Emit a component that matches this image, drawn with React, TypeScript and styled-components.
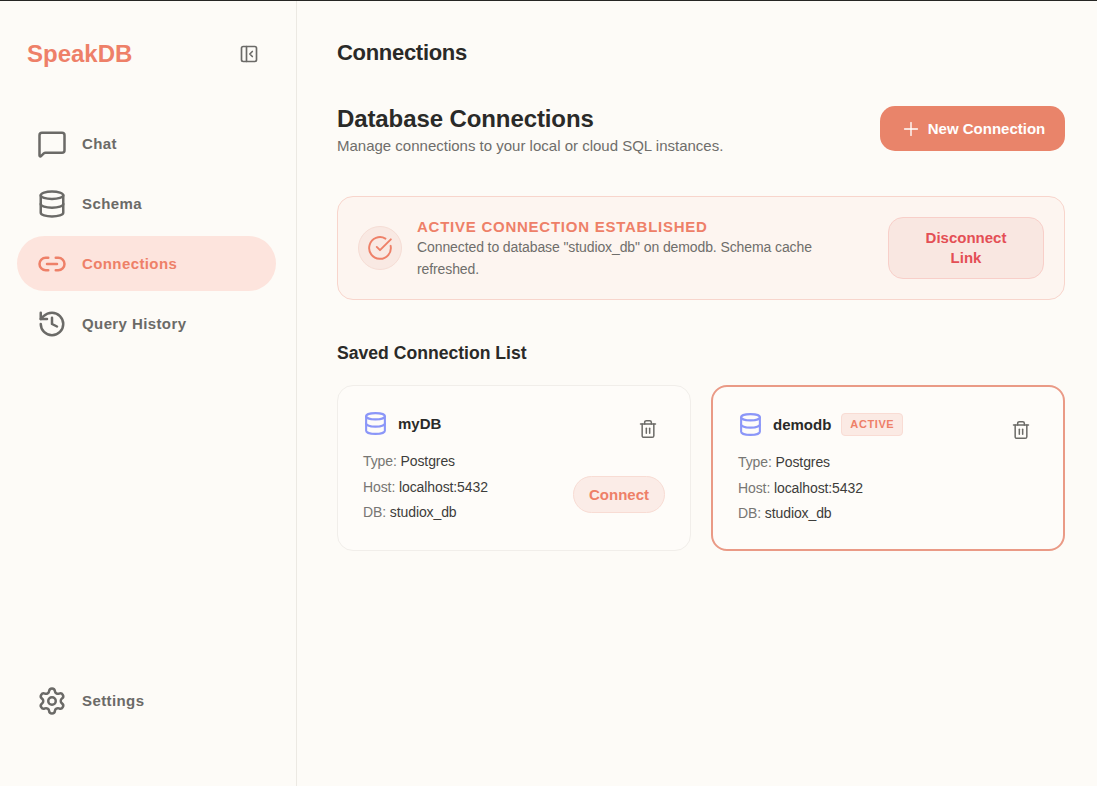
import React from 'react';
import styled, { createGlobalStyle } from 'styled-components';
import {
  CircleCheckBig,
  Database,
  History,
  Link2,
  MessageSquare,
  PanelLeftClose,
  Plus,
  Settings,
  Trash2,
} from 'lucide-react';

const GlobalStyle = createGlobalStyle`
  html, body {
    margin: 0;
    height: 100%;
    background: #fdfbf7;
  }
  #root { height: 100%; }
  * { box-sizing: border-box; }
  body {
    font-family: "Liberation Sans", Arial, sans-serif;
    color: #2a2a28;
  }
`;

const Shell = styled.div`
  display: flex;
  height: 786px;
  border-top: 1px solid #262624;
  overflow: hidden;
`;

const Sidebar = styled.aside`
  width: 297px;
  flex: none;
  display: flex;
  flex-direction: column;
  padding: 0 20px 0 17px;
  border-right: 1px solid #ece9e3;
`;

const SideHead = styled.div`
  display: flex;
  align-items: center;
  justify-content: space-between;
  height: 106px;
  padding: 0 17px 0 10px;
`;

const Logo = styled.span`
  font-size: 24px;
  font-weight: 700;
  color: #ee8068;
`;

const CollapseButton = styled.span`
  display: flex;
  color: #6b6a67;
`;

const Nav = styled.nav`
  display: flex;
  flex-direction: column;
  gap: 5px;
  margin-top: 9px;
`;

const NavItem = styled.a<{ $active?: boolean }>`
  display: flex;
  align-items: center;
  gap: 15px;
  height: 55px;
  padding: 0 20px;
  border-radius: 28px;
  font-size: 15px;
  font-weight: 700;
  letter-spacing: 0.4px;
  color: ${({ $active }) => ($active ? '#ee8068' : '#6b6a67')};
  background: ${({ $active }) => ($active ? '#fde4dd' : 'transparent')};
`;

const SideFoot = styled.div`
  margin-top: auto;
  padding-bottom: 58px;
`;

const Main = styled.main`
  flex: 1;
  min-width: 0;
  padding: 0 32px 0 40px;
`;

const PageTitle = styled.h1`
  margin: 0;
  height: 105px;
  padding-bottom: 2px;
  display: flex;
  align-items: center;
  font-size: 22px;
  font-weight: 700;
  letter-spacing: -0.3px;
  color: #2a2a28;
`;

const HeaderRow = styled.div`
  display: flex;
  justify-content: space-between;
  align-items: flex-start;
`;

const Heading = styled.h2`
  margin: 0;
  font-size: 24px;
  line-height: 26px;
  font-weight: 700;
  letter-spacing: -0.1px;
  color: #2a2a28;
`;

const Subtitle = styled.p`
  margin: 5px 0 0;
  font-size: 15px;
  line-height: 18px;
  color: #6f6e6b;
`;

const PrimaryButton = styled.button`
  display: flex;
  align-items: center;
  justify-content: center;
  gap: 6px;
  width: 185px;
  height: 45px;
  border: 0;
  border-radius: 15px;
  background: #e9846a;
  color: #fff;
  font: 700 15px "Liberation Sans", Arial, sans-serif;
`;

const Banner = styled.section`
  display: flex;
  align-items: center;
  height: 104px;
  margin-top: 41px;
  padding: 0 20px;
  border: 1px solid #f8d5cc;
  border-radius: 16px;
  background: #fdf5f0;
`;

const BannerIcon = styled.span`
  display: flex;
  align-items: center;
  justify-content: center;
  flex: none;
  width: 44px;
  height: 44px;
  border: 1px solid #f6ddd5;
  border-radius: 50%;
  background: #f9e9e3;
  color: #ee8068;
`;

const BannerText = styled.div`
  flex: 1;
  margin: 0 70px 0 15px;
  padding-top: 2px;
`;

const BannerTitle = styled.div`
  font-size: 15px;
  line-height: 18px;
  font-weight: 700;
  letter-spacing: 0.75px;
  color: #ee8068;
`;

const BannerBody = styled.div`
  font-size: 14px;
  line-height: 22px;
  letter-spacing: -0.1px;
  color: #6f6e6b;
`;

const DisconnectButton = styled.button`
  flex: none;
  width: 156px;
  height: 62px;
  border: 1px solid #f8cfc9;
  border-radius: 15px;
  background: #f9e7e1;
  color: #e44f55;
  font: 700 15px/20px "Liberation Sans", Arial, sans-serif;
  padding: 0 30px;
`;

const SectionTitle = styled.h3`
  margin: 43px 0 22px;
  font-size: 17.6px;
  line-height: 20px;
  font-weight: 700;
  color: #2a2a28;
`;

const CardGrid = styled.div`
  display: grid;
  grid-template-columns: 1fr 1fr;
  gap: 20px;
`;

const Card = styled.article<{ $active?: boolean }>`
  display: flex;
  justify-content: space-between;
  height: 166px;
  padding: 16px 25px 0;
  border: ${({ $active }) => ($active ? '2px solid #ea9a86' : '1px solid #f1eeea')};
  border-radius: 16px;
  background: #fefcf9;
`;

const CardInfo = styled.div`
  display: flex;
  flex-direction: column;
`;

const CardName = styled.div`
  display: flex;
  align-items: center;
  gap: 10px;
  height: 42px;
  margin-bottom: 5px;
  font-size: 15px;
  font-weight: 700;
`;

const DbIcon = styled.span`
  display: flex;
  color: #8b96f8;
`;

const ActiveBadge = styled.span`
  padding: 4px 8px;
  border: 1px solid #f9dcd4;
  border-radius: 4px;
  background: #fbeae4;
  color: #ee8068;
  font-size: 11px;
  line-height: 13px;
  font-weight: 700;
  letter-spacing: 0.6px;
`;

const DetailRow = styled.div`
  font-size: 14px;
  line-height: 25.5px;
  letter-spacing: -0.1px;
  color: #3d3d3b;
`;

const DetailLabel = styled.span`
  color: #777673;
`;

const CardActions = styled.div`
  display: flex;
  flex-direction: column;
  align-items: flex-end;
  justify-content: space-between;
  padding-bottom: 37px;
`;

const DeleteButton = styled.span`
  display: flex;
  color: #6b6a67;
  margin-top: 17px;
  margin-right: 7px;
  align-self: flex-end;
`;

const ConnectButton = styled.button`
  width: 92px;
  height: 37px;
  border: 1px solid #f8dcd4;
  border-radius: 19px;
  background: #fbece7;
  color: #ee8068;
  font: 700 15px "Liberation Sans", Arial, sans-serif;
`;

const connections = [
  { name: 'myDB', active: false },
  { name: 'demodb', active: true },
];

const navItems = [
  { label: 'Chat', icon: MessageSquare },
  { label: 'Schema', icon: Database },
  { label: 'Connections', icon: Link2, active: true },
  { label: 'Query History', icon: History },
];

export default function App() {
  return (
    <>
      <GlobalStyle />
      <Shell>
        <Sidebar>
          <SideHead>
            <Logo>SpeakDB</Logo>
            <CollapseButton>
              <PanelLeftClose size={20} />
            </CollapseButton>
          </SideHead>
          <Nav>
            {navItems.map((item) => (
              <NavItem key={item.label} $active={item.active}>
                <item.icon size={30} />
                {item.label}
              </NavItem>
            ))}
          </Nav>
          <SideFoot>
            <NavItem>
              <Settings size={30} />
              Settings
            </NavItem>
          </SideFoot>
        </Sidebar>
        <Main>
          <PageTitle>Connections</PageTitle>
          <HeaderRow>
            <div>
              <Heading>Database Connections</Heading>
              <Subtitle>Manage connections to your local or cloud SQL instances.</Subtitle>
            </div>
            <PrimaryButton>
              <Plus size={22} strokeWidth={1.5} />
              New Connection
            </PrimaryButton>
          </HeaderRow>
          <Banner>
            <BannerIcon>
              <CircleCheckBig size={26} strokeWidth={1.8} />
            </BannerIcon>
            <BannerText>
              <BannerTitle>ACTIVE CONNECTION ESTABLISHED</BannerTitle>
              <BannerBody>
                Connected to database "studiox_db" on demodb. Schema cache refreshed.
              </BannerBody>
            </BannerText>
            <DisconnectButton>Disconnect Link</DisconnectButton>
          </Banner>
          <SectionTitle>Saved Connection List</SectionTitle>
          <CardGrid>
            {connections.map((conn) => (
              <Card key={conn.name} $active={conn.active}>
                <CardInfo>
                  <CardName>
                    <DbIcon>
                      <Database size={25} strokeWidth={2} />
                    </DbIcon>
                    {conn.name}
                    {conn.active && <ActiveBadge>ACTIVE</ActiveBadge>}
                  </CardName>
                  <DetailRow>
                    <DetailLabel>Type:</DetailLabel> Postgres
                  </DetailRow>
                  <DetailRow>
                    <DetailLabel>Host:</DetailLabel> localhost:5432
                  </DetailRow>
                  <DetailRow>
                    <DetailLabel>DB:</DetailLabel> studiox_db
                  </DetailRow>
                </CardInfo>
                <CardActions>
                  <DeleteButton>
                    <Trash2 size={20} strokeWidth={1.8} />
                  </DeleteButton>
                  {!conn.active && <ConnectButton>Connect</ConnectButton>}
                </CardActions>
              </Card>
            ))}
          </CardGrid>
        </Main>
      </Shell>
    </>
  );
}
